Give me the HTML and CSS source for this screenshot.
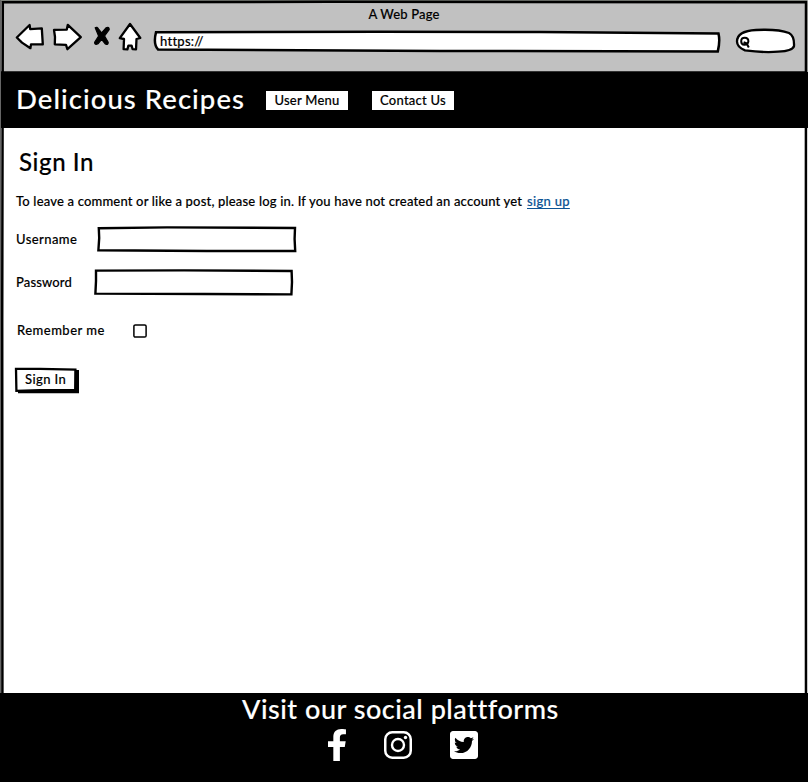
FILE: index.html
```html
<!DOCTYPE html>
<html lang="en">
<head>
<meta charset="utf-8">
<title>Delicious Recipes</title>
<link rel="stylesheet" href="styles.css">
</head>
<body>
<div class="window">
  <svg class="frame" viewBox="0 0 808 782" aria-hidden="true">
    <path d="M0 0H808V1.4H0Z" fill="#7d817b"/>
    <path d="M0 0H1V693H0Z" fill="#666"/>
    <path d="M807 0h1V72h-1Z" fill="#b0b2af"/>
    <path d="M2.4 693L2.2 320L2.8 2.2L330 1.8L806 2.2L805.8 380L806 693" fill="none" stroke="#000" stroke-width="2.5"/>
  </svg>
  <header class="chrome">
    <div class="chrome-title"><span class="t-page">A Web Page</span></div>
    <div class="toolbar">
      <svg class="tools" width="136" height="40" viewBox="10 20 136 40" fill="#fff" stroke="#000" stroke-width="2.3" stroke-linejoin="round" stroke-linecap="round">
        <path d="M16.8 37.5L29.6 25L30.2 29.2L41.8 28.4L42.8 44.4L31 44.4L30.4 48.2L22 42.6Z"/>
        <path d="M54 29.8L66.8 29.6L67.8 24.8L80.8 37.2L67.4 49.2L66 44.8L54.8 44.4L55 37Z"/>
        <path d="M130 24L140.3 38L136.5 39L136 49.4L132.6 49.2L131.6 45.6L128.4 45.6L127.4 49.4L123.6 49.2L124 39L119.8 38.2Z"/>
        <path d="M95.2 27.8Q97 26.4 98.6 29L101.6 32.8L106 27.8Q109.4 26.4 109.2 29.6L104.6 36L108.2 42.4Q108.2 45.4 105.4 44L101.6 39.4L98 43.8Q94.6 45.4 94.6 42.4L98.6 36Z" fill="#000" stroke-width="1.2"/>
      </svg>
      <div class="address">
        <svg width="568" height="24" viewBox="153 29 568 24"><path d="M156 32.2L380 31.8L540 32L718.5 33.6Q720.3 41 717.8 51.4L440 51L158 49.4Q153 44 156 32.2Z" fill="#fff" stroke="#000" stroke-width="2.5"/></svg>
        <span class="t-url">https://</span>
      </div>
      <svg class="search" width="62" height="28" viewBox="735 27 62 28" fill="none" stroke="#000" stroke-width="2.3">
        <path d="M737 41.5Q737 31 756 30Q778 28.8 789 33Q794.5 36 794 46Q793 51 778 51.6Q766 53 745 50.4Q737 47 737 41.5Z" fill="#fff"/>
        <path d="M741.2 41.2Q741.2 37.8 744.8 37.8Q748.4 37.8 748.4 41.4Q748 44.8 744.4 44.8Q741.2 44.6 741.2 41.2ZM743.6 42.2L746.6 43.4L748.8 47.4" stroke-width="2"/>
      </svg>
    </div>
  </header>
  <nav class="nav">
    <span class="brand">Delicious Recipes</span>
    <a class="nav-button user"><span>User Menu</span></a>
    <a class="nav-button contact"><span>Contact Us</span></a>
  </nav>
  <main class="content">
    <h1 class="heading">Sign In</h1>
    <p class="intro"><span class="t-intro">To leave a comment or like a post, please log in. If you have not created an account yet</span><a class="link">sign up</a></p>
    <div class="row username">
      <label>Username</label>
      <svg width="200" height="27" viewBox="0 0 200 27"><path d="M1.8 2.2L70 1.4L198 2L197.6 13L198.2 25L110 25L1.4 24.2L2.2 12Z" fill="#fff" stroke="#000" stroke-width="2.4"/></svg>
    </div>
    <div class="row password">
      <label>Password</label>
      <svg width="200" height="27" viewBox="0 0 200 27"><path d="M2 1.6L90 1.4L197.6 2L198 13L197.4 25.4L110 25L1.4 24.6L2 12Z" fill="#fff" stroke="#000" stroke-width="2.4"/></svg>
    </div>
    <div class="row remember">
      <label>Remember me</label>
      <svg class="checkbox" width="14" height="14" viewBox="0 0 14 14"><rect x=".9" y=".9" width="12.2" height="12.2" rx="1.4" fill="#fff" stroke="#000" stroke-width="1.5"/></svg>
    </div>
    <div class="submit">
      <svg width="66" height="28" viewBox="14 366 66 28"><path d="M18 389V393.2H79V370H75V388Z"/><path d="M16 368.8L40 368.8L75.4 369.6L75.2 389.8L40 390.2L16.4 390.8Z" fill="#fff" stroke="#000" stroke-width="2.3"/></svg>
      <span class="t-submit">Sign In</span>
    </div>
  </main>
  <footer class="footer">
    <div class="social-title"><span>Visit our social plattforms</span></div>
    <div class="social">
      <svg width="18" height="32" viewBox="22.9 0 275 512" preserveAspectRatio="none"><path fill="#fff" d="M279.14 288l14.22-92.66h-88.91v-60.13c0-25.35 12.42-50.06 52.24-50.06h40.42V6.26S260.43 0 225.36 0c-73.22 0-121.08 44.38-121.08 124.72v70.62H22.89V288h81.39v224h100.17V288z"/></svg>
      <svg width="28" height="28" viewBox="0 0 28 28" fill="none" stroke="#fff"><rect x="1.25" y="1.25" width="25.5" height="25.5" rx="7" stroke-width="2.5"/><circle cx="14" cy="14" r="6" stroke-width="2.4"/><circle cx="21.5" cy="6.5" r="1.7" fill="#fff" stroke="none"/></svg>
      <svg width="28" height="28" viewBox="0 32 448 448"><path fill="#fff" d="M400 32H48C21.5 32 0 53.5 0 80v352c0 26.5 21.5 48 48 48h352c26.5 0 48-21.5 48-48V80c0-26.5-21.5-48-48-48zm-48.9 158.8c.2 2.8.2 5.7.2 8.5 0 86.7-66 186.6-186.6 186.6-37.2 0-71.7-10.8-100.7-29.4 5.3.6 10.4.8 15.8.8 30.7 0 58.9-10.4 81.4-28-28.8-.6-53-19.5-61.3-45.5 10.1 1.5 19.2 1.5 29.6-1.2-30-6.1-52.5-32.5-52.5-64.4v-.8c8.7 4.9 18.9 7.9 29.6 8.3a65.447 65.447 0 0 1-29.2-54.6c0-12.2 3.2-23.4 8.9-33.1 32.3 39.8 80.8 65.8 135.2 68.6-9.3-44.5 24-80.6 64-80.6 18.9 0 35.9 7.9 47.9 20.7 14.8-2.8 29-8.3 41.6-15.8-4.9 15.2-15.2 28-28.8 36.1 13.2-1.4 26-5.1 37.8-10.2-8.9 13.1-20.1 24.7-32.9 34z"/></svg>
    </div>
  </footer>
</div>
</body>
</html>
```
FILE: styles.css
```css
* { box-sizing: border-box; }
body {
  margin: 0;
  width: 808px;
  height: 782px;
  overflow: hidden;
  font: 500 13px/20px Lato, "Liberation Sans", sans-serif;
  font-variant-ligatures: none;
  -webkit-text-stroke: 0.15px;
  color: #000;
  background: #fff;
}
svg { display: block; flex: none; }
span, a, label, h1 { white-space: nowrap; }
.window { position: relative; height: 782px; display: flex; flex-direction: column; }
.frame { position: absolute; inset: 0; width: 808px; height: 782px; pointer-events: none; }
.chrome { height: 72px; background: #c1c1c1; border-bottom: 1px solid #333; }
.chrome-title { height: 20px; padding-top: 4px; text-align: center; letter-spacing: 0.15px; }
.toolbar { display: flex; padding-left: 10px; height: 40px; }
.address { display: grid; width: 568px; margin: 9px 0 0 7px; align-content: start; }
.address > * { grid-area: 1 / 1; }
.t-url { padding: 2px 0 0 7px; letter-spacing: 0.25px; }
.search { margin: 7px 0 0 14px; }
.nav { height: 56px; display: flex; align-items: center; padding-left: 16px; background: #000; }
.brand { width: 250px; color: #fff; font-size: 27.5px; line-height: 36px; letter-spacing: 1.05px; margin-top: -2px; }
.nav-button { height: 19px; background: #fff; text-align: center; line-height: 19px; letter-spacing: 0.25px; }
.user { width: 82px; margin-right: 24px; }
.contact { width: 82px; }
.content { height: 565px; padding: 18px 0 0 16px; }
.heading { margin: 0 0 0 3px; font-size: 24px; line-height: 31px; font-weight: 500; letter-spacing: 0.6px; }
.intro { margin: 14px 0 0; display: flex; }
.t-intro { width: 511px; letter-spacing: 0.18px; }
.link { color: #0b5394; text-decoration: underline; text-underline-offset: 2px; letter-spacing: 0.3px; }
.row { display: flex; align-items: center; height: 27px; }
.row label { padding-bottom: 2px; }
.username { margin-top: 15px; }
.username label { width: 81px; letter-spacing: 0.42px; }
.password { margin-top: 16px; }
.password label { width: 78px; letter-spacing: 0.12px; }
.remember { margin-top: 21px; padding-left: 1px; }
.remember label { width: 116px; letter-spacing: 0.47px; padding-bottom: 1px; }
.submit { display: grid; width: 66px; margin: 22px 0 0 -2px; }
.submit > * { grid-area: 1 / 1; }
.t-submit { padding: 3px 0 0 11px; letter-spacing: 0.4px; }
.footer { height: 89px; background: #000; color: #fff; }
.social-title { height: 36px; font-size: 27px; line-height: 32px; padding-left: 242px; letter-spacing: 0.52px; }
.social { display: flex; align-items: center; padding-left: 328px; gap: 38px; height: 32px; }
```
